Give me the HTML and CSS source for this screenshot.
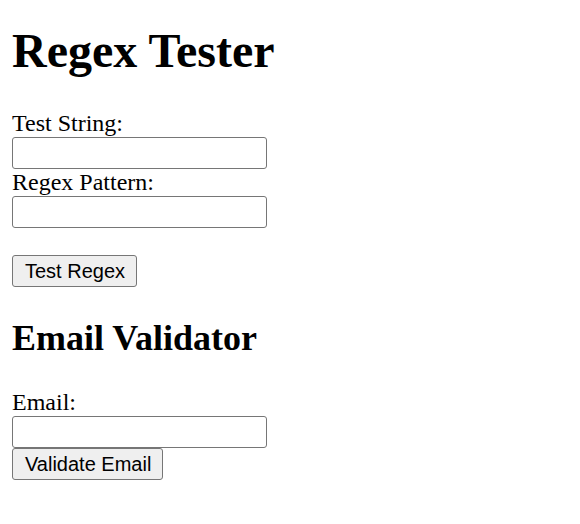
FILE: index.html
```html
<!DOCTYPE html>
<html lang="en">
<head>
<meta charset="utf-8">
<title>Regex Tester</title>
<link rel="stylesheet" href="styles.css">
</head>
<body>
<h1 class="title">Regex Tester</h1>
<form class="form">
  <label class="field-label" for="test-string">Test String:</label>
  <input class="field-input" type="text" id="test-string">
  <label class="field-label" for="regex-pattern">Regex Pattern:</label>
  <input class="field-input" type="text" id="regex-pattern">
  <button class="btn btn-spaced" type="button">Test Regex</button>
</form>
<h2 class="subtitle">Email Validator</h2>
<form class="form">
  <label class="field-label" for="email">Email:</label>
  <input class="field-input" type="text" id="email">
  <button class="btn" type="button">Validate Email</button>
</form>
</body>
</html>
```
FILE: styles.css
```css
html, body {
  background: #ffffff;
}
body {
  margin: 0;
  padding: 0 12px;
  font-family: "Liberation Serif", "Times New Roman", serif;
  font-size: 24px;
  color: #000000;
}
.title {
  margin: 23px 0 32px;
  font-size: 48px;
  line-height: 55px;
  font-weight: bold;
}
.subtitle {
  margin: 30px 0 30px;
  font-size: 36px;
  line-height: 42px;
  font-weight: bold;
}
.form {
  margin: 0;
  display: flex;
  flex-direction: column;
  align-items: flex-start;
}
.field-label {
  display: block;
  line-height: 27px;
}
.field-input {
  box-sizing: border-box;
  width: 255px;
  height: 32px;
  margin: 0;
  padding: 0 4px;
  border: 1px solid #767676;
  border-radius: 3px;
  background: #ffffff;
  font-family: "Liberation Sans", Arial, sans-serif;
  font-size: 20px;
}
.btn {
  box-sizing: border-box;
  height: 32px;
  margin: 0;
  padding: 0 11px 0 12px;
  border: 1px solid #767676;
  border-radius: 3px;
  background: #efefef;
  color: #000000;
  font-family: "Liberation Sans", Arial, sans-serif;
  font-size: 20px;
  line-height: 30px;
}
.btn-spaced {
  margin-top: 27px;
}
```
